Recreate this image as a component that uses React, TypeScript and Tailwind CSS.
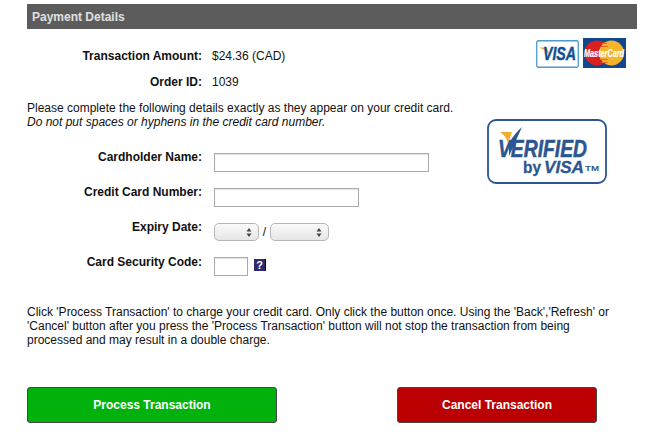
const labelClass = "w-[175px] text-right text-xs font-bold text-[#111] leading-[14px]";
const inputClass = "h-[19px] border border-[#aaaaaa] bg-white shadow-[inset_0_1px_1px_#e4e4e4]";

function VisaLogo() {
  return (
    <svg width="43" height="28" viewBox="0 0 43 28">
      <rect x="0.75" y="0.75" width="41.5" height="26.5" rx="1.5" fill="#fff" stroke="#4a9ad0" strokeWidth="1.3" />
      <path d="M3 7.5 L10 7.5 Q12 9 13 14 Q9 9.5 3 7.5Z" fill="#f0a828" />
      <text x="7" y="20" fontFamily="Liberation Sans" fontSize="18" fontWeight="700" fontStyle="italic" fill="#0f4f92" stroke="#0f4f92" strokeWidth="0.4" textLength="33" lengthAdjust="spacingAndGlyphs">VISA</text>
    </svg>
  );
}

function MasterCardLogo() {
  return (
    <svg width="43" height="30" viewBox="0 0 43 30">
      <rect width="43" height="30" fill="#10478f" />
      <circle cx="14" cy="15" r="12.5" fill="#d9201e" />
      <circle cx="28.5" cy="15" r="12.5" fill="#f4b42c" />
      <path d="M19 5.500h5M18 8.500h7M17 21.500h8M18.500 24.500h6" stroke="#e8661f" strokeWidth="1.2" />
      <text x="1" y="19" fontFamily="Liberation Sans" fontSize="10.500" fontWeight="700" fontStyle="italic" fill="#ffffff" stroke="#ffffff" strokeWidth="0.2" textLength="40" lengthAdjust="spacingAndGlyphs">MasterCard</text>
    </svg>
  );
}

function VerifiedByVisa() {
  return (
    <svg width="120" height="66" viewBox="0 0 120 66">
      <rect x="1" y="1" width="118" height="63" rx="8" fill="#fff" stroke="#2c5591" strokeWidth="1.8" />
      <path d="M13 13 L25 13 L21 24 Q19 17 13 13Z" fill="#f3ac2a" />
      <path d="M22 37 L35 8 Q28 14 22 24 Z" fill="#2c5591" />
      <text x="11" y="38" fontFamily="Liberation Sans" fontSize="23" fontWeight="700" fontStyle="italic" fill="#2c5591" stroke="#2c5591" strokeWidth="0.5" textLength="89" lengthAdjust="spacingAndGlyphs">VERIFIED</text>
      <text x="36" y="54" fontFamily="Liberation Sans" fontSize="17" fontWeight="700" fill="#2c5591" stroke="#2c5591" strokeWidth="0.3" textLength="18" lengthAdjust="spacingAndGlyphs">by</text>
      <text x="57" y="54" fontFamily="Liberation Sans" fontSize="17" fontWeight="700" fontStyle="italic" fill="#2c5591" stroke="#2c5591" strokeWidth="0.3" textLength="40" lengthAdjust="spacingAndGlyphs">VISA</text>
      <text x="98" y="52" fontFamily="Liberation Sans" fontSize="8" fontWeight="700" fill="#2c5591" textLength="14" lengthAdjust="spacingAndGlyphs">TM</text>
    </svg>
  );
}

function FakeSelect({ width }: { width: string }) {
  return (
    <div className={`${width} h-[18px] mt-[4px] rounded-[5px] border border-[#b5b5b5] bg-gradient-to-b from-[#fafafa] to-[#e6e6e6] flex items-center justify-end pr-[6px]`}>
      <svg width="6" height="9" viewBox="0 0 6 9">
        <path d="M3 0 L5.500 3.400 H0.500Z M3 9 L5.500 5.600 H0.500Z" fill="#444" />
      </svg>
    </div>
  );
}

function FormRow({ label, top, children }: { label: string; top: string; children: React.ReactNode }) {
  return (
    <div className={`flex items-start ${top}`}>
      <div className={`${labelClass} pt-px`}>{label}</div>
      <div className="ml-[12px] flex items-start">{children}</div>
    </div>
  );
}

export default function App() {
  return (
    <div className="w-[665px] h-[432px] bg-white overflow-hidden pt-[4px] pl-[27px] pr-[28px] font-['Liberation_Sans',Arial,sans-serif] text-xs leading-[14px] text-[#111]">
      <div className="h-[25px] bg-[#5c5c5c] pl-[5px] flex items-center text-xs font-bold text-[#e0e0e0]">
        Payment Details
      </div>

      <div className="flex justify-between">
        <div>
          <div className="flex pt-[20px]">
            <div className={labelClass}>Transaction Amount:</div>
            <div className="ml-[10px]">$24.36 (CAD)</div>
          </div>
          <div className="flex pt-[12px]">
            <div className={labelClass}>Order ID:</div>
            <div className="ml-[10px]">1039</div>
          </div>
          <p className="mt-[12px] whitespace-nowrap">
            Please complete the following details exactly as they appear on your credit card.
            <br />
            <em>Do not put spaces or hyphens in the credit card number.</em>
          </p>
          <FormRow label="Cardholder Name:" top="mt-[20px]">
            <div className={`w-[215px] mt-[4px] ${inputClass}`} />
          </FormRow>
          <FormRow label="Credit Card Number:" top="mt-[12px]">
            <div className={`w-[145px] mt-[4px] ${inputClass}`} />
          </FormRow>
          <FormRow label="Expiry Date:" top="mt-[12px]">
            <FakeSelect width="w-[45px]" />
            <span className="w-[11px] mt-[6px] text-center">/</span>
            <FakeSelect width="w-[59px]" />
          </FormRow>
          <FormRow label="Card Security Code:" top="mt-[13px]">
            <div className={`w-[34px] mt-[3px] ${inputClass}`} />
            <div className="ml-[6px] mt-[5px] w-[11px] h-[12px] bg-[#2e2a6c] shadow-[1px_0_0_#000] flex items-center justify-center text-[11px] leading-none font-bold text-white">?</div>
          </FormRow>
        </div>

        <div className="flex flex-col items-end">
          <div className="flex items-start gap-[4px] pt-[9px] pr-[11px]">
            <div className="pt-[2px]"><VisaLogo /></div>
            <MasterCardLogo />
          </div>
          <div className="mt-[51px] mr-[30px]">
            <VerifiedByVisa />
          </div>
        </div>
      </div>

      <p className="mt-[29px] pr-[20px]">
        Click 'Process Transaction' to charge your credit card. Only click the button once. Using the 'Back','Refresh' or 'Cancel' button after you press the 'Process Transaction' button will not stop the transaction from being processed and may result in a double charge.
      </p>

      <div className="mt-[40px] flex justify-between pr-[40px]">
        <button className="w-[250px] h-[36px] rounded-[3px] border border-[#444] bg-[#02b20c] text-xs font-bold text-white">
          Process Transaction
        </button>
        <button className="w-[200px] h-[36px] rounded-[3px] border border-[#444] bg-[#ba0000] text-xs font-bold text-white">
          Cancel Transaction
        </button>
      </div>
    </div>
  );
}
